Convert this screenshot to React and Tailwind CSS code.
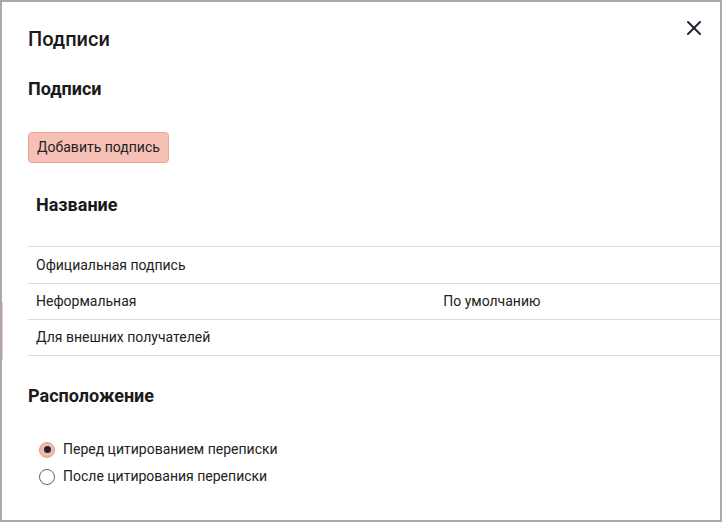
import { X } from "lucide-react";

const rows = [
  { name: "Официальная подпись", def: "" },
  { name: "Неформальная", def: "По умолчанию" },
  { name: "Для внешних получателей", def: "" },
];

function Radio({ checked, label }) {
  return (
    <label className="flex items-center gap-2 h-[27px] cursor-pointer">
      {checked ? (
        <span className="w-[16px] h-[16px] rounded-full bg-[#f4b9ad] border border-[#e59a8b] flex items-center justify-center">
          <span className="w-[7px] h-[7px] rounded-full bg-[#1f2630]" />
        </span>
      ) : (
        <span className="w-[16px] h-[16px] rounded-full border-[1.5px] border-[#5f6368] bg-white" />
      )}
      <span className="text-[14px] text-[#222]">{label}</span>
    </label>
  );
}

export default function App() {
  return (
    <div
      className="w-[722px] h-[522px] border-2 border-[#a9a9a9] bg-white relative overflow-hidden text-[#1a1a1a]"
      style={{ fontFamily: "Roboto, 'Noto Sans', sans-serif" }}
    >
      <div className="absolute left-0 top-[300px] w-px h-[58px] bg-[#f1cfc9]" />
      <button className="absolute right-[14px] top-[14px] text-[#1f2630]">
        <X size={24} strokeWidth={2} />
      </button>
      <div className="pl-[26px] pt-[24px]">
        <h1 className="text-[20px] font-medium leading-[26px]">Подписи</h1>
        <h2 className="mt-[25px] text-[18px] font-bold leading-[24px]">Подписи</h2>
        <button className="mt-[31px] h-[31px] px-[8px] rounded-[4px] bg-[#f6c0b6] border border-[#eea596] text-[14px] text-[#222]">
          Добавить подпись
        </button>
        <h3 className="mt-[30px] ml-[8px] text-[18px] font-bold leading-[24px]">Название</h3>
        <div className="mt-[29px] border-t border-[#dcdcdc]">
          {rows.map((r, i) => (
            <div
              key={r.name}
              className={`flex items-center border-b border-[#dcdcdc] text-[14px] text-[#222] ${i === 0 ? "h-[37px]" : "h-[36px]"}`}
            >
              <div className="w-[60%] pl-[8px]">{r.name}</div>
              <div className="flex-1">{r.def}</div>
            </div>
          ))}
        </div>
        <h3 className="mt-[28px] text-[18px] font-bold leading-[24px]">Расположение</h3>
        <div className="mt-[28px] pl-[11px]">
          <Radio checked label="Перед цитированием переписки" />
          <Radio label="После цитирования переписки" />
        </div>
      </div>
    </div>
  );
}
